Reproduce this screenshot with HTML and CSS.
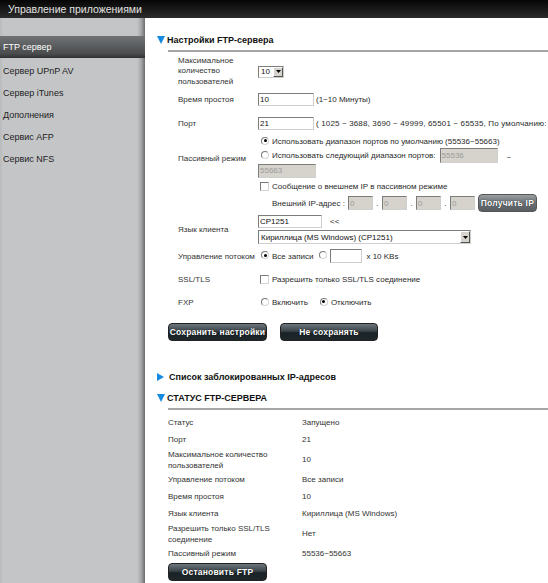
FILE: index.html
```html
<!DOCTYPE html>
<html lang="ru">
<head>
<meta charset="utf-8">
<title>Управление приложениями</title>
<link rel="stylesheet" href="styles.css">
</head>
<body>
<div class="header">Управление приложениями</div>
<div class="layout">
  <nav class="sidebar">
    <div class="nav-spacer"></div>
    <a class="nav-item active">FTP сервер</a>
    <a class="nav-item first">Сервер UPnP AV</a>
    <a class="nav-item">Сервер iTunes</a>
    <a class="nav-item">Дополнения</a>
    <a class="nav-item">Сервис AFP</a>
    <a class="nav-item">Сервис NFS</a>
  </nav>
  <main class="content">
    <div class="sec-title first-title"><span class="tri-down"></span><span>Настройки FTP-сервера</span></div>
    <div class="rule"></div>

    <div class="form">
      <div class="row r-max">
        <div class="label multi">Максимальное<br>количество<br>пользователей</div>
        <div class="ctrl">
          <div class="select sel-small"><span class="sel-val">10</span><span class="sel-btn"><svg width="5" height="3" viewBox="0 0 5 3"><path d="M0 0H5L2.5 3Z" fill="#000"/></svg></span></div>
        </div>
      </div>
      <div class="row r-24">
        <div class="label">Время простоя</div>
        <div class="ctrl"><input class="txt w56" type="text" value="10"><span class="hint">(1~10 Минуты)</span></div>
      </div>
      <div class="row r-24">
        <div class="label">Порт</div>
        <div class="ctrl"><input class="txt w56" type="text" value="21"><span class="hint port-hint">( 1025 ~ 3688, 3690 ~ 49999, 65501 ~ 65535, По умолчанию:</span></div>
      </div>
      <div class="row r-passive">
        <div class="label">Пассивный режим</div>
        <div class="ctrl col">
          <div class="line l1"><input class="rad" type="radio" name="pasv" checked><span>Использовать диапазон портов по умолчанию (55536~55663)</span></div>
          <div class="line l2"><input class="rad" type="radio" name="pasv"><span>Использовать следующий диапазон портов:</span><input class="txt dis w58 h15 ml4" type="text" value="55536" disabled><span class="tilde">~</span></div>
          <div class="line l3"><input class="txt dis w58 h14" type="text" value="55663" disabled></div>
        </div>
      </div>
      <div class="row r-extip">
        <div class="label"></div>
        <div class="ctrl col">
          <div class="line l4"><input class="chk" type="checkbox"><span>Сообщение о внешнем IP в пассивном режиме</span></div>
          <div class="line l5">
            <span class="ext-label">Внешний IP-адрес :</span>
            <input class="txt dis ip" type="text" value="0" disabled><span class="dot">.</span>
            <input class="txt dis ip" type="text" value="0" disabled><span class="dot">.</span>
            <input class="txt dis ip" type="text" value="0" disabled><span class="dot">.</span>
            <input class="txt dis ip" type="text" value="0" disabled>
            <button class="btn btn-gray" type="button">Получить IP</button>
          </div>
        </div>
      </div>
      <div class="row r-lang">
        <div class="label">Язык клиента</div>
        <div class="ctrl col">
          <div class="line l6"><input class="txt w64" type="text" value="CP1251"><span class="arrows">&lt;&lt;</span></div>
          <div class="select sel-wide"><span class="sel-val">Кириллица (MS Windows) (CP1251)</span><span class="sel-btn"><svg width="5" height="3" viewBox="0 0 5 3"><path d="M0 0H5L2.5 3Z" fill="#000"/></svg></span></div>
        </div>
      </div>
      <div class="row r-24">
        <div class="label">Управление потоком</div>
        <div class="ctrl"><input class="rad" type="radio" name="flow" checked><span>Все записи</span><input class="rad ml6" type="radio" name="flow"><input class="txt w32 h14" type="text" value=""><span class="hint2">x 10 KBs</span></div>
      </div>
      <div class="row r-23">
        <div class="label">SSL/TLS</div>
        <div class="ctrl"><input class="chk" type="checkbox"><span>Разрешить только SSL/TLS соединение</span></div>
      </div>
      <div class="row r-23">
        <div class="label">FXP</div>
        <div class="ctrl"><input class="rad" type="radio" name="fxp"><span>Включить</span><input class="rad ml12" type="radio" name="fxp" checked><span>Отключить</span></div>
      </div>
    </div>

    <div class="actions">
      <button class="btn btn-dark w99" type="button">Сохранить настройки</button>
      <button class="btn btn-dark w98" type="button">Не сохранять</button>
    </div>

    <div class="sec-title sec2"><span class="tri-right"></span><span>Список заблокированных IP-адресов</span></div>
    <div class="sec-title sec3"><span class="tri-down"></span><span>СТАТУС FTP-СЕРВЕРА</span></div>
    <div class="rule"></div>

    <div class="status">
      <div class="srow"><div class="sl">Статус</div><div class="sv">Запущено</div></div>
      <div class="srow"><div class="sl">Порт</div><div class="sv">21</div></div>
      <div class="srow tall"><div class="sl">Максимальное количество<br>пользователей</div><div class="sv">10</div></div>
      <div class="srow"><div class="sl">Управление потоком</div><div class="sv">Все записи</div></div>
      <div class="srow"><div class="sl">Время простоя</div><div class="sv">10</div></div>
      <div class="srow"><div class="sl">Язык клиента</div><div class="sv">Кириллица (MS Windows)</div></div>
      <div class="srow tall"><div class="sl">Разрешить только SSL/TLS<br>соединение</div><div class="sv">Нет</div></div>
      <div class="srow"><div class="sl">Пассивный режим</div><div class="sv">55536~55663</div></div>
    </div>
    <div class="actions2">
      <button class="btn btn-dark w99" type="button">Остановить FTP</button>
    </div>
  </main>
</div>
</body>
</html>
```

FILE: styles.css
```css
html, body {
  margin: 0;
  padding: 0;
  overflow: hidden;
}
body {
  width: 548px;
  height: 583px;
  font-family: "Liberation Sans", Arial, sans-serif;
  font-size: 8px;
  color: #2a2a2a;
  background: #fff;
}
.header {
  height: 18px;
  line-height: 18px;
  padding-left: 8px;
  font-size: 10.5px;
  color: #e2e2e2;
  background: linear-gradient(#050505, #2c2c2c);
}
.layout {
  display: flex;
  height: 565px;
}
.sidebar {
  width: 145px;
  flex: none;
  background: linear-gradient(to right, #b9babc 0, #c4c5c7 3px, #c4c5c7 137px, #a7a8aa 141px, #8a8b8d 143px, #6a6b6d 145px);
}
.nav-spacer { height: 18px; }
.nav-item {
  display: block;
  height: 22px;
  line-height: 22px;
  padding-left: 3px;
  font-size: 9px;
  color: #222;
}
.nav-item.active {
  color: #fff;
  background: linear-gradient(#707375, #4a4c4e 80%, #2e3032);
}
.nav-item.first { margin-top: 2px; }

.content {
  flex: 1;
  min-width: 0;
  padding-left: 12px;
  white-space: nowrap;
}
.sec-title {
  display: flex;
  align-items: center;
  height: 14px;
  font-weight: bold;
  font-size: 9px;
  color: #111;
}
.first-title { margin-top: 15px; }
.sec2 { margin-top: 29px; }
.sec3 { margin-top: 7px; }
.tri-down {
  width: 0; height: 0;
  border-left: 4.5px solid transparent;
  border-right: 4.5px solid transparent;
  border-top: 8px solid #1689e0;
  margin-right: 2px;
}
.tri-right {
  width: 0; height: 0;
  border-top: 4.5px solid transparent;
  border-bottom: 4.5px solid transparent;
  border-left: 7px solid #1689e0;
  margin-right: 5px;
}
.rule {
  height: 2px;
  margin: 3px 0 0 11px;
  background: #a6a6a6;
}

.form {
  margin: 4px 0 0 21px;
}
.row {
  display: flex;
  align-items: center;
}
.label {
  width: 80px;
  flex: none;
  color: #333;
}
.label.multi { line-height: 10.5px; }
.ctrl {
  display: flex;
  align-items: center;
}
.ctrl.col {
  flex-direction: column;
  align-items: flex-start;
}
.line {
  display: flex;
  align-items: center;
}
.r-max { height: 31px; }
.r-24 { height: 24px; }
.r-23 { height: 23px; }
.r-passive { height: 46px; align-items: flex-start; }
.r-passive .label { margin-top: 19px; }
.r-extip { height: 33px; align-items: flex-start; }
.r-lang { height: 30px; }
.l1 { height: 13px; }
.l2 { height: 15px; }
.l3 { height: 15px; }
.l4 { height: 11px; }
.l5 { height: 22px; }
.l6 { height: 14px; margin-bottom: 2px; }

.txt {
  box-sizing: border-box;
  height: 13px;
  padding: 0 1px;
  margin: 0;
  font-family: inherit;
  font-size: 8px;
  color: #111;
  background: #fff;
  border: 1px solid;
  border-color: #7c7c7c #cfcfcf #cfcfcf #7c7c7c;
  outline: none;
}
.txt.dis {
  background: #d6d3cc;
  color: #9a9a9a;
}
.w56 { width: 56px; }
.w58 { width: 58px; }
.w64 { width: 64px; }
.w32 { width: 32px; }
.h14 { height: 14px; }
.h15 { height: 15px; }
.ml4 { margin-left: 4px; }
.ml6 { margin-left: 6px !important; }
.ml12 { margin-left: 12px !important; }
.hint { margin-left: 2px; }
.port-hint { letter-spacing: 0.15px; }
.hint2 { margin-left: 4px; }
.tilde { margin-left: 9px; margin-top: 3px; }
.arrows { margin-left: 8px; }
.ext-label { margin-left: 14px; margin-right: 3px; }
.ip { width: 25px; height: 14px; }
.dot { width: 9px; text-align: center; }

.rad, .chk {
  appearance: none;
  -webkit-appearance: none;
  box-sizing: border-box;
  margin: 0 3px 0 3px;
  width: 8px;
  height: 8px;
  background: #fff;
  flex: none;
  position: relative;
}
.rad {
  border-radius: 50%;
  border: 1px solid;
  border-color: #7a7a7a #d4d4d4 #d4d4d4 #7a7a7a;
  margin-top: -2px;
}
.rad:checked::after {
  content: "";
  position: absolute;
  left: 1.5px; top: 1.5px;
  width: 3px; height: 3px;
  border-radius: 50%;
  background: #000;
}
.chk {
  width: 9px;
  height: 9px;
  margin-left: 2px;
  border: 1px solid;
  border-color: #7a7a7a #d4d4d4 #d4d4d4 #7a7a7a;
}

.select {
  box-sizing: border-box;
  display: flex;
  align-items: center;
  background: #fff;
  border: 1px solid;
  border-color: #7c7c7c #cfcfcf #cfcfcf #7c7c7c;
}
.sel-small { width: 26px; height: 12px; }
.sel-wide { width: 213px; height: 14px; }
.sel-val { flex: 1; padding-left: 2px; overflow: hidden; color: #111; }
.sel-btn {
  box-sizing: border-box;
  width: 10px;
  height: 100%;
  display: flex;
  align-items: center;
  justify-content: center;
  background: #d6d3cc;
  border: 1px solid;
  border-color: #fff #555 #555 #fff;
}

.btn {
  box-sizing: border-box;
  height: 18px;
  padding: 0;
  margin: 0;
  font-family: inherit;
  font-size: 8.5px;
  font-weight: bold;
  color: #fff;
  border-radius: 4px;
  border: 1px solid #222;
  text-shadow: 0 0 1px #000;
  letter-spacing: 0.2px;
}
.btn-dark {
  background: linear-gradient(#6d767c, #3a4348 45%, #1a2226 55%, #1e272b);
}
.btn-gray {
  width: 59px;
  margin-left: 3px;
  border-color: #555;
  background: linear-gradient(#9a9ea1, #6a7075 50%, #575d61);
}
.w99 { width: 99px; }
.w98 { width: 98px; }
.actions {
  display: flex;
  gap: 13px;
  margin: 9px 0 0 11px;
}

.status {
  margin: 4px 0 0 11px;
}
.srow {
  display: flex;
  align-items: center;
  height: 17px;
}
.srow.tall { height: 23px; }
.sl {
  width: 134px;
  flex: none;
  line-height: 11px;
  color: #333;
}
.sv { color: #333; }
.actions2 {
  margin: 1px 0 0 11px;
}
```
